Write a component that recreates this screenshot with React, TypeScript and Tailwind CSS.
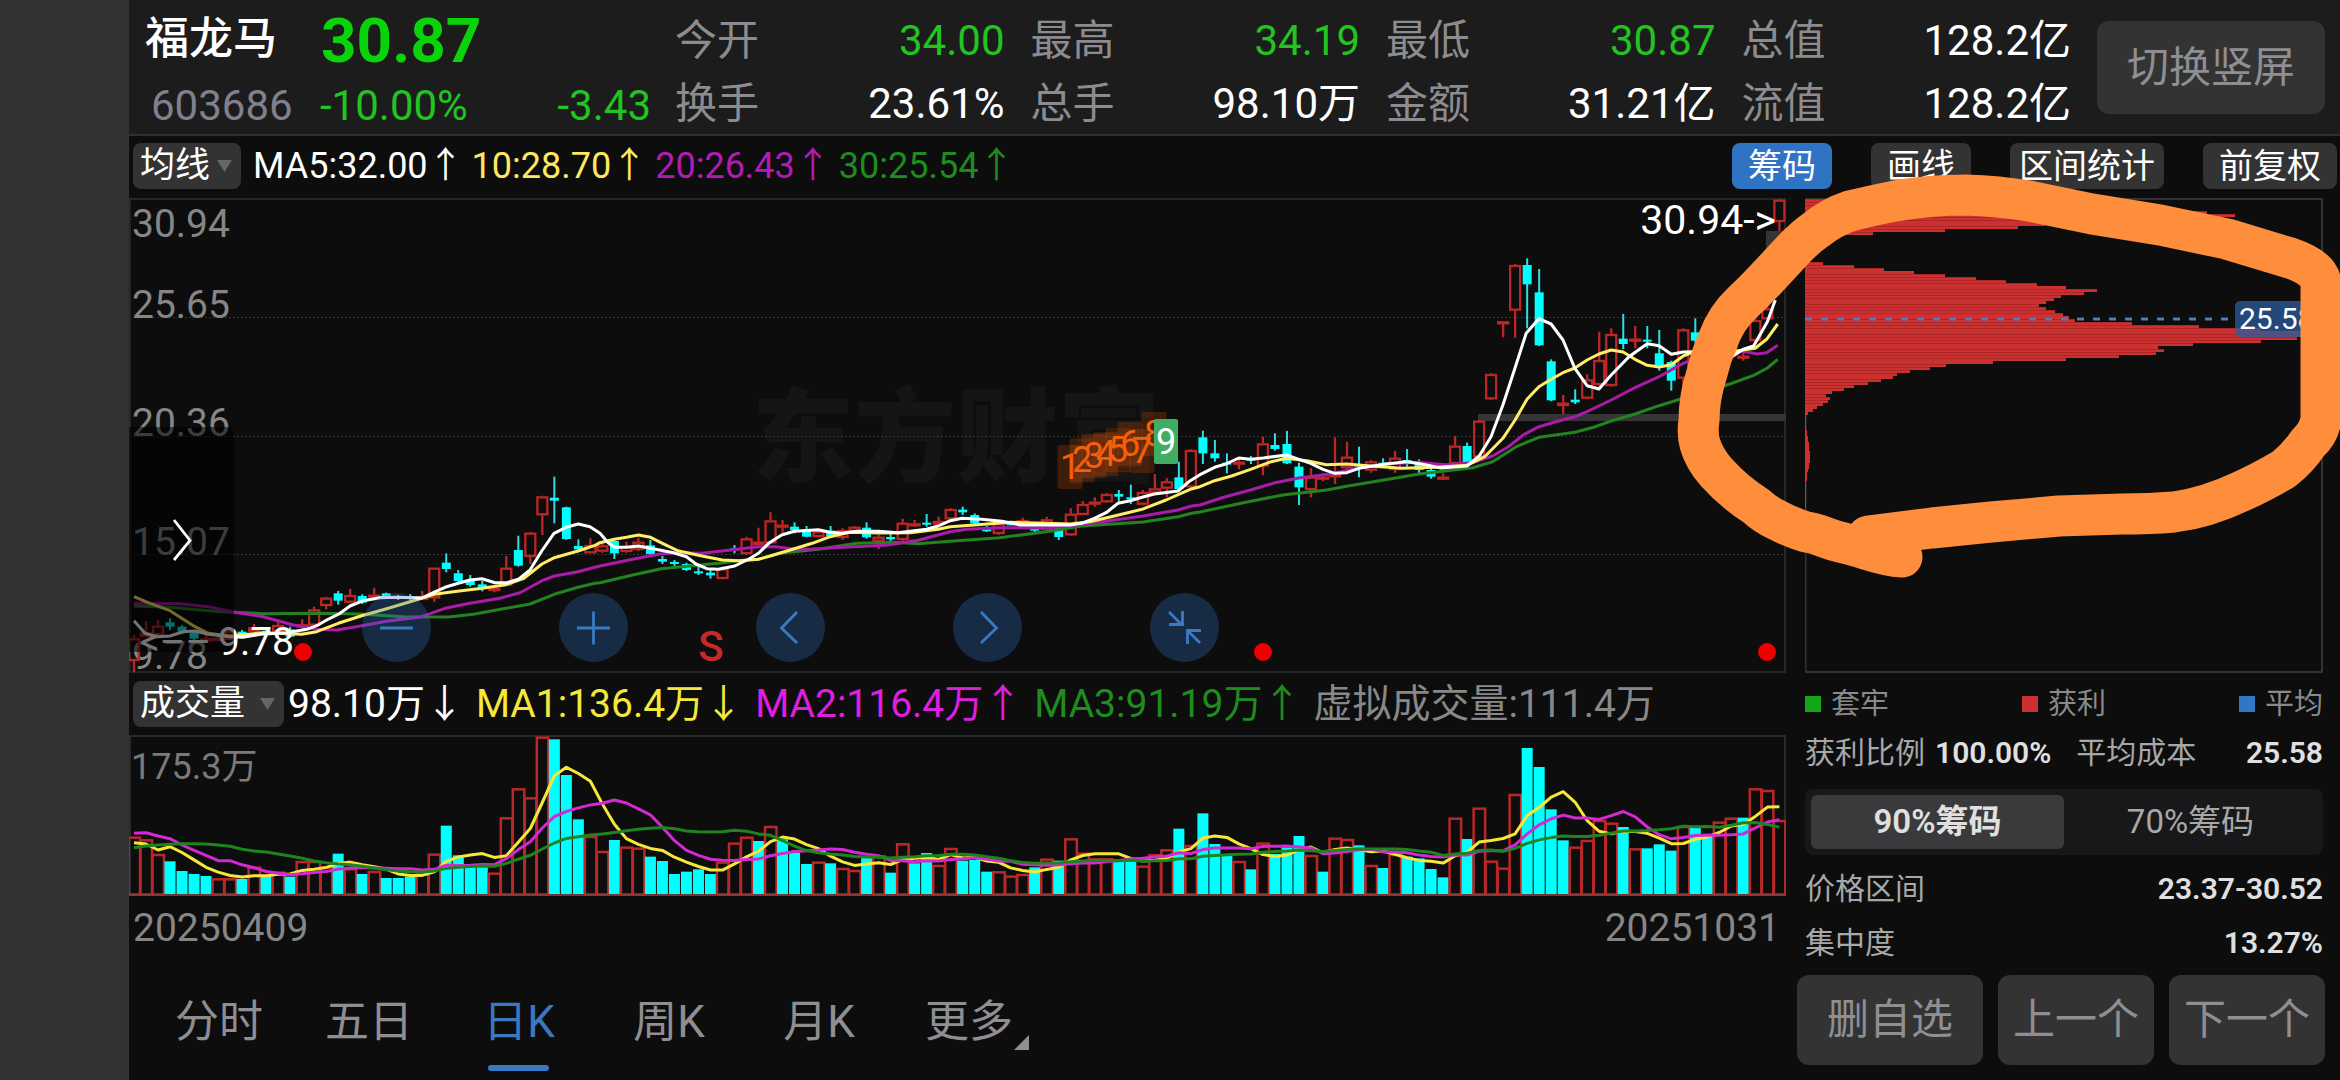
import React from "react";

type Candle = [number, number, number, number, boolean];

const FIRST_X = 134;
const STEP = 12.01;
const barX = (i: number) => FIRST_X + STEP * i;

/* Candles: "high,bodyTop,bodyBottom,low" in thirds of a pixel below the block's origin, R rising / C falling. */
const CANDLE_BLOCKS: { origin: number; rows: string }[] = [
  {
    origin: 190,
    rows:
      "R1335,1345,1413,1447 R1293,1328,1340,1340 R1290,1307,1335,1335 C1285,1297,1310,1320 C1305,1310,1325,1332 C1325,1328,1346,1350 R1330,1345,1353,1353 R1340,1344,1352,1352 R1315,1322,1350,1350 C1320,1325,1333,1335 R1302,1312,1325,1325 C1315,1322,1333,1335 R1295,1305,1325,1325 C1310,1318,1340,1342 R1288,1303,1312,1316 R1250,1258,1307,1307 R1220,1223,1248,1258 C1203,1210,1232,1244 R1197,1215,1238,1240 C1213,1218,1238,1242 R1193,1214,1220,1224 C1208,1210,1224,1226 C1215,1218,1226,1230 C1212,1220,1226,1232 R1203,1218,1230,1230 R1133,1133,1225,1235 C1090,1118,1137,1147 C1140,1150,1173,1176 C1155,1172,1185,1190 C1173,1183,1196,1204 R1190,1194,1202,1207 R1098,1133,1187,1187 C1037,1080,1127,1130 R1025,1028,1101,1122 R917,919,976,1035 C860,923,932,1000 C950,952,1047,1050 C1048,1068,1078,1080 R1045,1065,1090,1090 R1060,1066,1085,1088",
  },
  {
    origin: 360,
    rows:
      "C540,543,580,597 R545,558,576,578 R533,545,570,574 C540,556,582,585 C588,597,605,612 C600,606,611,618 C608,612,630,633 C620,634,640,645 C630,638,646,656 R620,625,657,658 C555,565,570,580 R530,535,582,584 R503,545,555,556 R457,481,550,552 R480,494,503,518 C487,500,510,520 C498,510,530,532 R508,513,531,532 C498,512,528,530 R505,510,534,540 R498,500,515,520 C487,503,532,536 R525,530,545,568 C522,531,538,545 R476,488,540,543 R480,490,498,500 C462,488,494,500 R470,483,494,495 R445,447,478,480 C440,449,457,465 C460,465,490,492 C498,506,514,516 R485,490,522,524 C485,490,494,496 R473,480,490,495 C500,506,512,518 R470,478,510,512 C500,505,531,540 R445,461,526,528 R423,432,465,466 R412,425,434,440 R400,402,427,428 C390,402,410,425 C374,412,418,432 R390,396,434,436 R342,385,400,402 R355,364,386,412 C305,352,387,390 R268,270,382,384",
  },
  {
    origin: 240,
    rows:
      "C572,592,640,672 C600,640,655,665 C640,668,674,700 R655,665,672,688 C648,655,662,672 R590,610,680,706 C580,615,627,632 C573,612,670,672 C668,680,742,795 R685,710,750,772 R700,710,717,724 R592,700,712,732 R605,650,685,690 C620,672,680,712 R660,664,692,698 C655,668,678,682 R633,653,690,698 C627,660,670,680 C658,670,690,704 C685,690,710,716 R700,710,716,718 R588,617,672,674 C608,618,668,672 R540,542,652,654 R400,402,478,480 R243,244,248,292 R72,75,212,293 C55,75,133,265 C87,157,316,318 C358,364,481,484 R465,488,498,522 C448,479,487,492 R403,418,476,478 R275,360,435,438 R265,282,438,440 C222,296,312,327 R258,296,303,325 C258,299,304,325 C270,340,376,392 C362,366,422,452 R265,268,416,450 C235,277,302,308 C280,300,340,360 R300,310,340,350 R300,310,340,350 R335,347,355,362 R225,240,303,306 R190,205,238,242 R-123,-121,-54,-27",
  },
];

const CANDLES: Candle[] = CANDLE_BLOCKS.flatMap(({ origin, rows }) =>
  rows.split(" ").map((row) => {
    const [h, t, b, l] = row.slice(1).split(",").map((v) => origin + Number(v) / 3);
    return [h, t, b, l, row[0] === "R"] as Candle;
  }),
);

/* Three consecutive stretches of each average line, every stretch with its own origin and x scale. */
const SCALES = [
  { x: 120, y: 190, k: 3 },
  { x: 600, y: 360, k: 2.45 },
  { x: 1200, y: 240, k: 2.529 },
];

const PRICE_LINES: { color: string; parts: string[] }[] = [
  {
    color: "#22831f",
    parts: [
      "42,1248 150,1252 300,1265 430,1271 600,1270 720,1272 850,1280 985,1281 1060,1273 1158,1255 1230,1242 1303,1213 1374,1192 1425,1180",
      "0,668 80,645 150,626 220,618 290,610 340,602 388,598 440,580 535,568 630,550 720,547 780,551 858,544 980,533 1093,515 1180,498 1330,486 1416,470 1450,460",
      "0,816 128,784 210,765 320,750 371,739 480,717 554,702 690,683 740,665 800,620 857,592 948,577 1000,560 1040,543 1100,522 1161,497 1222,475 1340,432 1400,406 1435,384 1461,358",
    ],
  },
  {
    color: "#a81ca8",
    parts: [
      "42,1240 180,1241 265,1250 340,1266 430,1280 520,1305 590,1318 650,1320 700,1312 800,1294 905,1280 975,1255 1050,1240 1140,1225 1200,1208 1266,1172 1303,1158 1374,1145 1425,1132",
      "0,618 80,598 150,581 200,578 250,580 320,570 388,560 430,560 480,568 520,567 610,561 700,556 780,541 858,515 900,508 980,503 1093,504 1170,494 1240,484 1330,468 1416,450 1450,438",
      "0,795 60,772 128,750 190,728 250,714 330,702 402,683 470,672 550,667 620,674 690,668 740,648 780,620 820,583 857,560 900,545 948,530 979,515 1040,480 1100,443 1161,410 1222,370 1252,355 1320,345 1374,334 1410,342 1433,338 1461,316",
    ],
  },
  {
    color: "#ffee66",
    parts: [
      "42,1220 90,1240 150,1262 225,1310 265,1330 330,1338 430,1328 545,1333 590,1325 655,1300 725,1277 800,1256 880,1232 943,1213 1000,1205 1086,1195 1158,1184 1210,1166 1266,1122 1303,1103 1374,1083 1425,1066",
      "0,548 35,538 65,532 94,525 124,532 153,550 190,572 250,588 300,600 340,602 388,598 417,588 476,566 520,550 564,530 610,517 682,519 760,518 829,508 858,500 917,495 1005,487 1093,490 1152,492 1200,485 1260,468 1328,448 1387,420 1446,388",
      "0,740 37,722 80,708 128,688 180,665 219,655 270,662 320,674 371,672 432,678 510,685 600,682 675,676 720,650 766,595 797,540 827,478 857,440 888,418 918,398 948,384 979,360 1009,342 1040,330 1070,336 1100,358 1131,376 1161,381 1192,374 1222,348 1252,333 1320,340 1385,328 1404,325 1433,298 1461,252",
    ],
  },
  {
    color: "#ffffff",
    parts: [
      "42,1292 75,1330 110,1340 150,1338 190,1325 225,1323 265,1333 330,1340 370,1342 420,1333 500,1328 560,1318 590,1307 620,1290 660,1270 690,1248 730,1232 780,1223 830,1222 905,1224 940,1208 975,1192 1015,1180 1050,1170 1086,1166 1125,1178 1160,1178 1195,1168 1230,1140 1265,1083 1302,1030 1338,1012 1375,1002 1410,1010",
      "0,520 20,548 35,562 65,562 94,558 124,565 180,578 212,590 235,612 262,626 290,628 330,618 365,597 388,580 415,548 445,525 476,514 535,509 560,516 594,520 630,514 682,514 730,518 770,512 800,508 829,498 858,482 887,475 935,478 985,484 1030,495 1093,495 1152,495 1180,490 1211,475 1240,458 1269,430 1299,422 1328,412 1358,402 1416,393 1446,362",
      "0,704 37,682 65,672 98,654 128,658 160,654 219,645 250,658 280,670 311,688 341,700 371,698 402,685 470,672 523,665 560,672 610,684 675,678 706,648 736,590 766,495 797,383 825,280 857,236 888,252 918,300 948,385 979,437 1009,447 1040,405 1085,350 1131,311 1161,317 1192,343 1222,336 1252,335 1283,350 1320,370 1374,328 1400,318 1435,245 1455,180",
    ],
  },
];

const linePoints = (parts: string[]) =>
  parts
    .flatMap((part, n) =>
      part.split(" ").map((pair) => {
        const [x, y] = pair.split(",").map(Number);
        const s = SCALES[n];
        return `${(s.x + x / s.k).toFixed(1)},${(s.y + y / 3).toFixed(1)}`;
      }),
    )
    .join(" ");

/* Volume bars: top edge in thirds of a pixel, R rising / C falling. */
const VOLUMES =
  "R500 R508 R552 C574 C603 C612 C618 R625 R625 C627 R590 C618 R605 C620 R573 R573 R590 C551 R595 C612 R603 C624 C624 C620 R610 R551 C467 C556 C590 C590 R608 R442 R355 R382 R200 C208 C315 C448 R498 R543 C510 R530 R533 C560 C573 C612 C605 C598 C612 R575 R518 R500 C513 R468 C508 C548 C582 R575 C580 R594 R600 C560 R556 C608 R520 C580 C549 R585 R534 C572 C570 C605 R604 R617 R612 C592 R566 C572 R505 R548 R565 R565 C574 C574 R587 R553 R538 C476 R525 C430 C522 C558 R573 C598 R518 C552 C532 C498 R555 C605 R503 R507 C526 R585 C594 R552 C560 C565 C597 C622 R443 C507 R413 R572 R593 R372 C234 C291 C418 C511 R530 R510 R450 R458 C471 R535 C535 C523 C542 R468 C472 C500 R455 R443 C443 R355 R360 R450"
    .split(" ")
    .map((v) => ({ up: v[0] === "R", top: Number(v.slice(1)) }));

const VOLUME_LINES = [
  { color: "#f6e83a", span: 5, lead: [518, 522, 540, 530] },
  { color: "#d428d4", span: 10, lead: [490, 488, 498, 506, 525, 541, 556, 572, 572] },
  {
    color: "#1f841f",
    span: 20,
    lead: [533, 528, 525, 523, 521, 521, 522, 525, 529, 538, 543, 546, 552, 558, 565, 573, 578, 582, 584],
  },
];

const averagePoints = (span: number, lead: number[]) =>
  VOLUMES.map((_, i) => {
    const y =
      i < lead.length ? lead[i] : VOLUMES.slice(i - span + 1, i + 1).reduce((sum, v) => sum + v.top, 0) / span;
    return `${barX(i).toFixed(1)},${(670 + y / 3).toFixed(1)}`;
  }).join(" ");

/* Chip rows, three pixels each: [first row's y, widths...]. */
const CHIP_BLOCKS: [number, number[]][] = [
  [199, [22, 150, 250, 330, 402, 430, 400, 300, 240, 213, 140, 68]],
  [
    262,
    [
      18, 49, 79, 109, 140, 171, 201, 232, 261, 292, 279, 256, 249, 241, 234, 241, 250, 258, 264, 270, 327, 394, 456,
      496, 506, 492, 456, 388, 353, 359, 351, 314, 261, 188, 141, 125, 105, 92, 88, 76, 63, 49, 39, 27, 21, 25, 23, 18,
      12, 8, 3, 1, 1, 1, 1, 1, 2, 2, 3, 3, 4, 4, 4, 5, 5, 5, 5, 4, 4, 3, 2, 2, 2, 1, 1, 1, 1, 1, 1, 1, 1, 1,
    ],
  ],
];

const COUNTS = [318, 298, 285, 280, 268, 248, 270, 219];

const STATS = [
  ["今开", "34.00", true, "换手", "23.61%"],
  ["最高", "34.19", true, "总手", "98.10万"],
  ["最低", "30.87", true, "金额", "31.21亿"],
  ["总值", "128.2亿", false, "流值", "128.2亿"],
] as const;

function Header() {
  return (
    <header className="flex items-start border-b-2 border-[#303030] bg-[#1c1c1c] pt-3.5 pr-[15px] pl-4 text-[42px] leading-[54px]">
      <div className="w-[530px] shrink-0 pb-px">
        <div className="flex items-start gap-11">
          <h1 className="text-[44px] leading-[50px] font-medium text-white">福龙马</h1>
          <strong className="text-[62px] leading-[54px] font-bold text-[#0bd30b]">30.87</strong>
        </div>
        <div className="mt-[11px] flex pl-1.5">
          <span className="w-[169px] text-[#80808e]">603686</span>
          <span className="flex-1 text-[#22c422]">-10.00%</span>
          <span className="pr-6 text-[#22c422]">-3.43</span>
        </div>
      </div>
      <dl className="grid flex-1 grid-cols-4 gap-x-[26px]">
        {STATS.map(([a, av, green, b, bv]) => (
          <div key={a} className="flex flex-col gap-[9px]">
            <div className="flex justify-between">
              <dt className="text-[#8c8c90]">{a}</dt>
              <dd className={green ? "text-[#22c422]" : "text-white"}>{av}</dd>
            </div>
            <div className="flex justify-between">
              <dt className="text-[#8c8c90]">{b}</dt>
              <dd className="text-white">{bv}</dd>
            </div>
          </div>
        ))}
      </dl>
      <button className="mt-[7px] ml-[26px] w-[228px] shrink-0 rounded-xl bg-[#333] pt-5 pb-[19px] text-[#8e8e93]">
        切换竖屏
      </button>
    </header>
  );
}

function Picker({ label, value, wide }: { label: string; value: string; wide?: boolean }) {
  return (
    <span className={wide ? "relative w-[151px]" : "relative w-[108px]"}>
      <select
        aria-label={label}
        className="block w-full appearance-none rounded-lg bg-[#333] pl-[7px] text-[35px] leading-[46px] text-white"
      >
        <option>{value}</option>
      </select>
      <svg viewBox="0 0 15 12" className="pointer-events-none absolute top-[17px] right-[9px] w-[15px]">
        <path d="M0 0H15L7.5 12Z" fill="#666" />
      </svg>
    </span>
  );
}

function Toolbar() {
  return (
    <div className="flex items-center pt-[7px] pr-[3px] pb-[9px] pl-1">
      <Picker label="均线" value="均线" />
      <p className="ml-3 flex flex-1 gap-2 text-[36px] leading-[46px]">
        <span className="text-white">MA5:32.00↑</span>
        <span className="text-[#fde860]">10:28.70↑</span>
        <span className="text-[#b41ab4]">20:26.43↑</span>
        <span className="text-[#1f8c1f]">30:25.54↑</span>
      </p>
      <div className="flex gap-[39px] text-[34px] leading-[46px] text-white">
        <button className="rounded-lg bg-[#2f74c4] px-4">筹码</button>
        <button className="rounded-lg bg-[#333] px-4">画线</button>
        <button className="rounded-lg bg-[#333] px-[9px]">区间统计</button>
        <button className="rounded-lg bg-[#333] px-4">前复权</button>
      </div>
    </div>
  );
}

function PriceChart() {
  return (
    <svg viewBox="129 198 1657 475" className="block w-full" role="img" aria-label="日K线图">
      <text x="752" y="474" fontSize="102" fontWeight="900" fill="#151515">
        东方财富
      </text>
      <g stroke="#343434" strokeWidth="1" strokeDasharray="2 2">
        <path d="M129 317.500H1786M129 436.500H1786M129 554.500H1786" />
      </g>
      <path d="M130 672V199H1785V672Z" fill="none" stroke="#262626" strokeWidth="2" />
      <g fontSize="39" fill="#868686">
        <text x="132" y="237">30.94</text>
        <text x="132" y="318">25.65</text>
        <text x="132" y="436">20.36</text>
        <text x="132" y="555">15.07</text>
        <text x="132" y="669">9.78</text>
      </g>
      <path d="M1478 414H1786V421H1478ZM1766 231H1786V250H1766Z" fill="#353535" />
      {CANDLES.map(([h, t, b, l, up], i) => {
        const x = barX(i);
        const height = Math.max(b - t, 2);
        return up ? (
          <g key={i} stroke="#bc2626" strokeWidth="2.300" fill="none">
            <path d={`M${x} ${h}V${t}M${x} ${b}V${l}`} />
            <rect x={x - 5} y={t + 1} width="10" height={Math.max(height - 2, 1)} />
          </g>
        ) : (
          <g key={i} fill="#00ffff">
            <rect x={x - 1} y={h} width="2" height={l - h} fill="#2fdede" />
            <rect x={x - 4.5} y={t} width="9" height={height} />
          </g>
        );
      })}
      {PRICE_LINES.map((line) => (
        <polyline
          key={line.color}
          points={linePoints(line.parts)}
          fill="none"
          stroke={line.color}
          strokeWidth="3"
          strokeLinejoin="round"
        />
      ))}
      <text x="140" y="655" fontSize="39" fill="#fff">
        &lt;––
      </text>
      <text x="218" y="655" fontSize="39" fill="#fff">
        9.78
      </text>
      <text x="1776" y="234" fontSize="41" fill="#fff" textAnchor="end">
        30.94-&gt;
      </text>
      <path d="M129 427H226Q234 427 234 435V644Q234 652 226 652H129Z" fill="#000" fillOpacity="0.55" />
      <path d="M174 520L190 540.500L174 560" fill="none" stroke="#fff" strokeWidth="2.800" />
      <g fontSize="36" textAnchor="middle">
        {COUNTS.map((c, i) => (
          <g key={i}>
            <rect x={1057.500 + i * 12} y={338 + c / 3 + 1} width="25" height="44" rx="2" fill="#ff5a00" fillOpacity="0.2" />
            <text x={1070 + i * 12} y={360 + c / 3 + 13} fill="#f2600c">
              {i + 1}
            </text>
          </g>
        ))}
        <rect x="1154" y="419" width="24" height="45" rx="2" fill="#3fae62" />
        <text x="1166" y="454" fill="#fff">
          9
        </text>
      </g>
      <text x="711" y="661" fontSize="42" fontWeight="500" fill="#c42a2a" textAnchor="middle">
        S
      </text>
      <g fill="#ee0000">
        <circle cx="303" cy="652" r="9" />
        <circle cx="1263" cy="652" r="9" />
        <circle cx="1767" cy="652" r="9" />
      </g>
    </svg>
  );
}

const CONTROLS = [
  { name: "缩小", d: "M18 35H51" },
  { name: "放大", d: "M18 35H51M34.500 18.500V51.500" },
  { name: "左移", d: "M41 19L25.500 35L41 50" },
  { name: "右移", d: "M28 19L43.500 35L28 50" },
  { name: "收起", d: "M19 19L32 32M19 31.500H32.500V18M50 50L37 37M37.500 51V37.500H51" },
];

function Controls() {
  return (
    <div className="absolute bottom-[11px] left-[233px] flex gap-32">
      {CONTROLS.map((c) => (
        <button key={c.name} aria-label={c.name} className="size-[69px] rounded-full bg-[#2f74c4]/30">
          <svg viewBox="0 0 69 69" className="size-full" fill="none" stroke="#3a7ac4" strokeWidth="2.800">
            <path d={c.d} />
          </svg>
        </button>
      ))}
    </div>
  );
}

function VolumeRow() {
  return (
    <div className="flex items-center py-2 pl-1">
      <Picker label="指标" value="成交量" wide />
      <p className="ml-1 flex gap-3 text-[39px] leading-[46px] whitespace-nowrap">
        <span className="text-white">98.10万↓</span>
        <span className="text-[#f6e83a]">MA1:136.4万↓</span>
        <span className="text-[#e01ee0]">MA2:116.4万↑</span>
        <span className="text-[#1f8c1f]">MA3:91.19万↑</span>
        <span className="text-[#888]">虚拟成交量:111.4万</span>
      </p>
    </div>
  );
}

function VolumeChart() {
  return (
    <svg viewBox="129 735 1657 161" className="block w-full" role="img" aria-label="成交量图">
      <path d="M130 895V736H1785V895Z" fill="none" stroke="#2a2a2a" strokeWidth="2" />
      <text x="131" y="779" fontSize="36" fill="#7a7a7a">
        175.3万
      </text>
      {VOLUMES.map((v, i) => {
        const y = 670 + v.top / 3;
        return v.up ? (
          <rect key={i} x={barX(i) - 5.500} y={y + 1} width="11.500" height={893.500 - y} fill="none" stroke="#b82828" strokeWidth="2.500" />
        ) : (
          <rect key={i} x={barX(i) - 5.500} y={y} width="11" height={894 - y} fill="#00ffff" />
        );
      })}
      <path d="M129 895H1786" stroke="#8a3a3a" strokeWidth="1.500" />
      {VOLUME_LINES.map((l) => (
        <polyline
          key={l.span}
          points={averagePoints(l.span, l.lead)}
          fill="none"
          stroke={l.color}
          strokeWidth="3"
          strokeLinejoin="round"
        />
      ))}
    </svg>
  );
}

function Tabs() {
  return (
    <nav className="flex pl-[15px] text-[44px] leading-[60px] text-[#8e8e93]">
      {["分时", "五日", "日K", "周K", "月K", "更多"].map((t) => (
        <button
          key={t}
          className={t === "日K" ? "relative w-[150px] pt-8 pb-7 text-[#3a78c0]" : "relative w-[150px] pt-8 pb-7"}
        >
          {t}
          {t === "日K" && <span className="absolute bottom-[9px] left-11 h-1.5 w-[61px] rounded-full bg-[#3a78c0]" />}
          {t === "更多" && (
            <svg viewBox="0 0 15 15" className="absolute right-[15px] bottom-[30px] w-[15px]">
              <path d="M15 0V15H0Z" fill="#8e8e93" />
            </svg>
          )}
        </button>
      ))}
    </nav>
  );
}

function ChipChart() {
  return (
    <svg viewBox="1805 198 518 475" className="block w-full" role="img" aria-label="筹码分布">
      <path d="M1805.500 672V199H2322V672Z" fill="none" stroke="#333" strokeWidth="2" />
      {CHIP_BLOCKS.map(([start, widths]) =>
        widths.map((w, i) => (
          <g key={`${start}-${i}`}>
            <rect x="1805" y={start + i * 3} width={w} height="3" fill="#cb3131" />
            {w > 8 && i % 5 !== 3 && (
              <rect x="1805" y={start + i * 3} width={w} height="1" fill="#ad2626" />
            )}
          </g>
        )),
      )}
      <path d="M1805 319H2230" stroke="#4a7abf" strokeWidth="3" strokeDasharray="7 9" />
      <rect x="2235" y="301" width="88" height="36" rx="5" fill="#2b5c9e" fillOpacity="0.75" />
      <text x="2239" y="329" fontSize="30" fill="#fff">
        25.58
      </text>
    </svg>
  );
}

function ChipPanel() {
  return (
    <aside className="flex w-[554px] shrink-0 flex-col">
      <div className="pr-[17px] pl-[19px]">
        <ChipChart />
        <ul className="mt-[11px] flex justify-between text-[29px] leading-10 text-[#8a8a8a]">
          <li className="flex items-center gap-2.5">
            <i className="size-4 bg-[#15a615]" />
            套牢
          </li>
          <li className="flex items-center gap-2.5">
            <i className="size-4 bg-[#cb3131]" />
            获利
          </li>
          <li className="flex items-center gap-2.5">
            <i className="size-4 bg-[#3276c8]" />
            平均
          </li>
        </ul>
        <dl className="mt-2 flex text-[30px] leading-[42px]">
          <dt className="text-[#a8a8a8]">获利比例</dt>
          <dd className="ml-2.5 font-semibold text-[#e0e0e0]">100.00%</dd>
          <dt className="ml-[25px] text-[#a8a8a8]">平均成本</dt>
          <dd className="ml-auto font-semibold text-[#e0e0e0]">25.58</dd>
        </dl>
        <div className="mt-[15px] flex rounded-lg bg-[#18181a] p-1.5 text-[33px] leading-[54px]">
          <button className="flex-1 rounded-md bg-[#3a3a3c] font-semibold text-[#e0e0e0]">90%筹码</button>
          <button className="flex-1 text-[#a8a8a8]">70%筹码</button>
        </div>
        <dl className="mt-[13px] text-[30px] leading-[42px]">
          <div className="flex justify-between">
            <dt className="text-[#a8a8a8]">价格区间</dt>
            <dd className="font-semibold text-[#e0e0e0]">23.37-30.52</dd>
          </div>
          <div className="mt-3 flex justify-between">
            <dt className="text-[#a8a8a8]">集中度</dt>
            <dd className="font-semibold text-[#e0e0e0]">13.27%</dd>
          </div>
        </dl>
      </div>
      <div className="mt-[11px] flex gap-[15px] pr-[15px] pl-[11px] text-[42px] leading-[90px] text-[#8e8e93]">
        <button className="w-[186px] rounded-xl bg-[#333]">删自选</button>
        <button className="flex-1 rounded-xl bg-[#333]">上一个</button>
        <button className="flex-1 rounded-xl bg-[#333]">下一个</button>
      </div>
    </aside>
  );
}

function Marker() {
  return (
    <svg viewBox="0 0 2340 1080" className="pointer-events-none absolute top-0 left-0 w-full" aria-hidden="true">
      <path
        d="M1902 557C1880 556 1866 548 1844 543C1828 540 1818 533 1806 532Q1790 527 1777 520Q1766 515 1756 506Q1734 492 1716 472Q1704 458 1700 444Q1697 434 1699 420Q1699 398 1707 373Q1711 356 1718 340Q1726 318 1742 303Q1754 292 1766 279Q1780 264 1793 250Q1804 238 1817 229Q1832 217 1850 211Q1870 206 1895 201Q1930 195 1966 195Q1998 196 2029 201L2092 214L2160 225L2227 239L2290 258Q2320 268 2321 284V418Q2320 432 2308 443Q2298 458 2284 469Q2262 482 2242 491Q2206 508 2174 512Q2150 514 2122 514L2059 516L1991 522L1932 528L1868 536"
        fill="none"
        stroke="#ff8e3c"
        strokeWidth="41"
        strokeLinecap="round"
        strokeLinejoin="round"
      />
    </svg>
  );
}

export default function App() {
  return (
    <div className="relative flex min-h-screen overflow-hidden bg-[#0d0d0d] font-['Roboto','Noto_Sans_CJK_SC',sans-serif]">
      <div className="w-[129px] shrink-0 bg-[#323232]" />
      <main className="min-w-0 flex-1">
        <Header />
        <Toolbar />
        <div className="flex">
          <section className="min-w-0 flex-1">
            <div className="relative">
              <PriceChart />
              <Controls />
            </div>
            <VolumeRow />
            <VolumeChart />
            <div className="flex justify-between pt-[9px] pr-1.5 pb-[9px] pl-1 text-[39px] leading-[46px] text-[#868686]">
              <time>20250409</time>
              <time>20251031</time>
            </div>
            <Tabs />
          </section>
          <ChipPanel />
        </div>
      </main>
      <Marker />
    </div>
  );
}
